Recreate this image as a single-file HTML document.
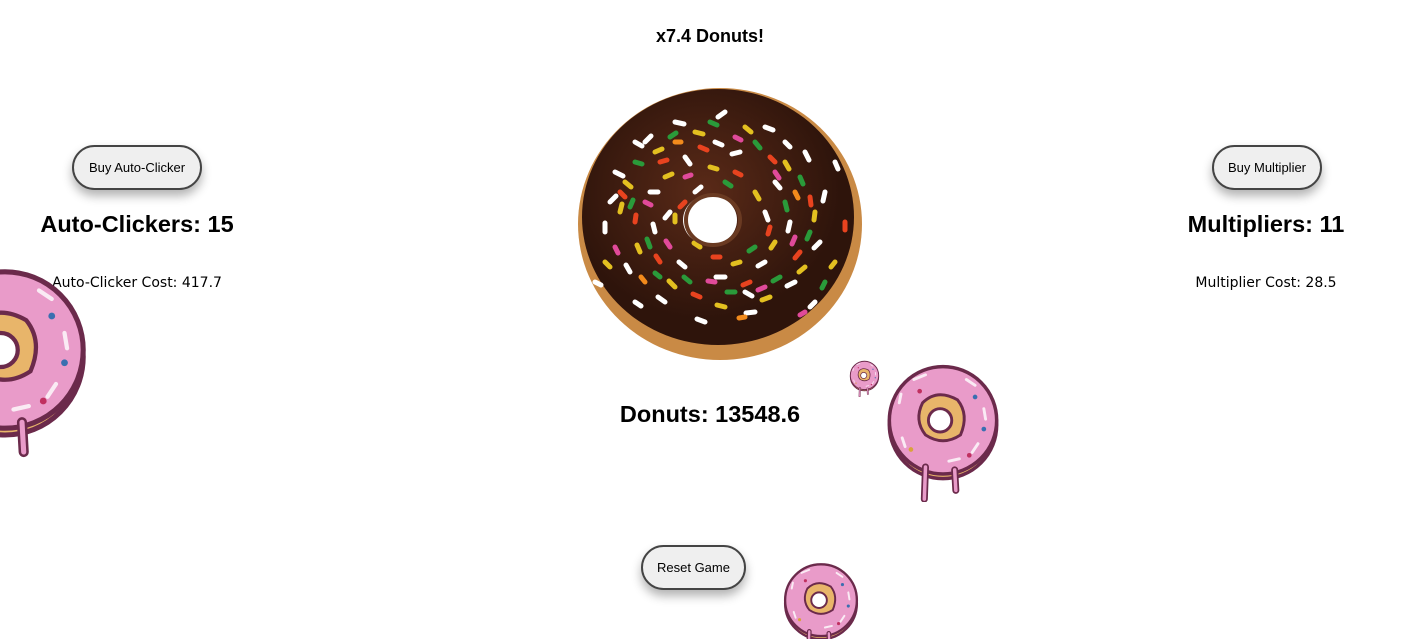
<!DOCTYPE html>
<html style="overflow:hidden"><head><meta charset="utf-8"><style>
html,body{overflow:hidden;margin:0}
body{width:1404px;height:639px;background:#fff;font-family:"DejaVu Sans","Liberation Sans",sans-serif;color:#000}
#w{position:relative;width:1404px;height:639px;overflow:hidden}
.a{position:absolute;white-space:nowrap;transform:translateX(-50%)}
.btn{position:absolute;border:2px solid #444;border-radius:24px;background:#efefef;font-family:"Liberation Sans",sans-serif;font-size:13px;display:flex;align-items:center;justify-content:center;box-shadow:0 6px 10px rgba(0,0,0,.3);box-sizing:border-box}
h2{margin:0;font-size:23.5px;font-weight:bold;font-family:"Liberation Sans",sans-serif}
svg{position:absolute}
</style></head><body><div id="w">
<svg width="0" height="0"><defs>
<symbol id="pd" viewBox="-100 -100 200 240">
<circle cx="0" cy="8" r="92" fill="#e8b56a" stroke="#6b2a4b" stroke-width="6"/>
<circle cx="0" cy="0" r="92" fill="#e99bc9" stroke="#6b2a4b" stroke-width="6"/>
<path d="M-35 -30 Q-10 -55 25 -35 Q45 -10 30 25 Q0 45 -30 25 Q-50 0 -35 -30Z" fill="#e8b56a" stroke="#6b2a4b" stroke-width="5"/>
<circle cx="-5" cy="0" r="20" fill="#fff" stroke="#6b2a4b" stroke-width="5"/>
<path d="M-30 80 L-32 135 M20 85 L22 120" stroke="#6b2a4b" stroke-width="12" stroke-linecap="round"/>
<path d="M-30 80 L-32 135 M20 85 L22 120" stroke="#e99bc9" stroke-width="6" stroke-linecap="round"/>
<g stroke="#fff" stroke-width="5" stroke-linecap="round" opacity=".8"><path d="M-50 -70 l20 -8 M40 -70 l15 10 M70 -20 l3 18 M60 40 l-10 15 M-70 30 l5 15 M-75 -30 l3 -15 M10 70 l18 -4"/></g>
<g fill="#c03060"><circle cx="-40" cy="-50" r="4"/><circle cx="55" cy="-40" r="4" fill="#3a6fb0"/><circle cx="45" cy="60" r="4"/><circle cx="-55" cy="50" r="4" fill="#d9a23a"/><circle cx="70" cy="15" r="4" fill="#3a6fb0"/></g>
</symbol></defs></svg>

<div class="a" style="left:710px;top:26px;font-size:18px;font-weight:bold;font-family:'Liberation Sans',sans-serif">x7.4 Donuts!</div>

<svg style="left:575px;top:82px" width="290" height="280" viewBox="0 0 290 280">
<defs><radialGradient id="ch" cx="45%" cy="40%"><stop offset="0" stop-color="#5a2a18"/><stop offset="1" stop-color="#2e140b"/></radialGradient></defs>
<ellipse cx="145" cy="142" rx="142" ry="136" fill="#c98a45"/>
<ellipse cx="143" cy="135" rx="136" ry="128" fill="url(#ch)"/>
<g stroke-width="5" stroke-linecap="round">
<path d="M40 90l8 4M70 60l6-6M100 40l9 2M150 30l-7 5M190 45l8 3M230 70l4 8M250 110l-2 9M245 160l-6 6M220 200l-8 4M180 230l-9 1M130 240l-8-3M90 220l-7-5M55 190l-4-7M30 150l0-9M35 120l6-6M75 110l8 0M110 75l5 7M165 70l-8 2M200 100l5 6M215 140l-2 9M190 180l-7 4M150 195l-9 0M110 185l-6-5M80 150l-2-8M60 220l6 4M240 220l-5 5M120 110l6-5M190 130l3 8M95 130l-5 6M170 210l7 4M140 60l7 3M210 60l5 5M60 60l7 4M20 200l6 3M260 80l3 7" stroke="#fff"/>
<path d="M50 100l6 5M80 70l7-3M120 50l8 2M170 45l6 5M210 80l4 7M240 130l-1 8M230 185l-6 5M195 215l-8 3M150 225l-8-2M100 205l-6-6M65 170l-3-7M45 130l2-8M90 95l7-3M135 85l7 2M180 110l4 7M200 160l-4 6M165 180l-7 2M125 165l-6-4M100 140l0-7M260 180l-4 5M30 180l5 5" stroke="#e3c020"/>
<path d="M60 80l7 2M95 55l6-4M135 40l7 3M180 60l5 6M225 95l3 7M235 150l-3 7M205 195l-7 4M160 210l-8 0M115 200l-6-5M75 165l-3-8M55 125l3-7M150 100l6 4M210 120l2 8M180 165l-6 4M130 150l-5-4M85 195l-5-4M250 200l-3 6" stroke="#2a9a3a"/>
<path d="M45 110l5 5M85 80l7-2M125 65l7 3M195 75l5 5M235 115l1 8M225 170l-5 6M175 200l-7 3M125 215l-7-3M85 180l-4-6M60 140l1-7M160 90l6 3M195 145l-2 7M145 175l-7 0M110 120l-5 5M270 140l0 8" stroke="#e8431f"/>
<path d="M70 120l6 3M110 95l6-2M160 55l6 3M200 90l4 6M220 155l-3 7M190 205l-7 3M140 200l-7-1M95 165l-4-6M230 230l-5 3M40 165l3 6" stroke="#e04a9a"/>
<path d="M100 60l6 0M220 110l3 6M170 235l-6 1M70 200l-4-5" stroke="#f28a1c"/>
</g>
<ellipse cx="135" cy="138" rx="27" ry="25" fill="#fff"/>
<ellipse cx="138" cy="138" rx="27" ry="25" fill="none" stroke="#6a3a22" stroke-width="4"/>
</svg>

<div class="btn" style="left:72px;top:145px;width:130px;height:45px">Buy Auto-Clicker</div>
<div class="btn" style="left:1212px;top:145px;width:110px;height:45px">Buy Multiplier</div>
<div class="a" style="left:137px;top:211px"><h2>Auto-Clickers: 15</h2></div>
<div class="a" style="left:1266px;top:211px"><h2>Multipliers: 11</h2></div>
<div class="a" style="left:137px;top:275px;font-size:14px">Auto-Clicker Cost: 417.7</div>
<div class="a" style="left:1266px;top:275px;font-size:14px">Multiplier Cost: 28.5</div>
<div class="a" style="left:710px;top:401px"><h2>Donuts: 13548.6</h2></div>
<div class="btn" style="left:641px;top:545px;width:105px;height:45px">Reset Game</div>

<svg style="left:-80px;top:265px" width="170" height="204"><use href="#pd"/></svg>
<svg style="left:881px;top:362px" width="124" height="140"><use href="#pd"/></svg>
<svg style="left:849px;top:360px" width="31" height="37"><use href="#pd"/></svg>
<svg style="left:782px;top:561px" width="78" height="78" overflow="hidden"><svg width="78" height="94"><use href="#pd"/></svg></svg>
</div></body></html>
